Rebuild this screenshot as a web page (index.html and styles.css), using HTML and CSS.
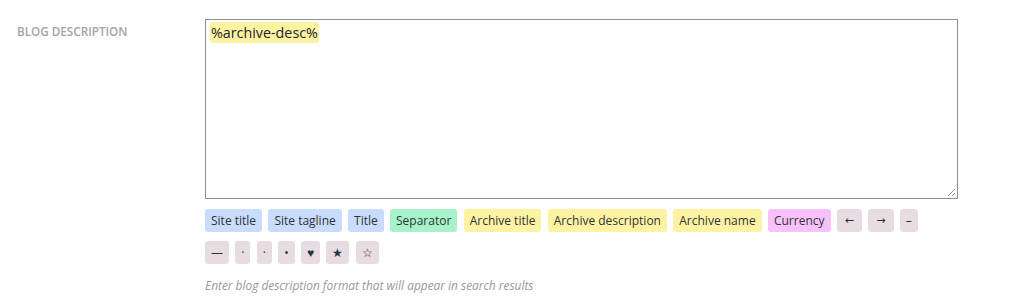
FILE: index.html
```html
<!DOCTYPE html>
<html lang="en">
<head>
    <meta charset="UTF-8">
    <title>Blog description</title>
    <link rel="stylesheet" href="styles.css">
</head>
<body>
    <!-- Settings row -->
    <div class="field-row">
        <label class="field-label">Blog Description</label>

        <div class="field-body">
            <!-- Editor with highlighted variable -->
            <div class="editor">
                <mark class="var">%archive-desc%</mark>
                <svg class="grip" width="10" height="10" viewBox="0 0 10 10">
                    <line x1="9" y1="2" x2="2" y2="9" stroke="#9a9a9a" stroke-width="1"/>
                    <line x1="9" y1="6" x2="6" y2="9" stroke="#9a9a9a" stroke-width="1"/>
                </svg>
            </div>

            <!-- Variable buttons -->
            <div class="tags">
                <span class="tag blue">Site title</span>
                <span class="tag blue">Site tagline</span>
                <span class="tag blue">Title</span>
                <span class="tag green">Separator</span>
                <span class="tag yellow">Archive title</span>
                <span class="tag yellow">Archive description</span>
                <span class="tag yellow">Archive name</span>
                <span class="tag pink">Currency</span>
                <span class="tag grey sym">&larr;</span>
                <span class="tag grey sym">&rarr;</span>
                <span class="tag grey">&ndash;</span>
                <span class="tag grey">&mdash;</span>
                <span class="tag grey">&middot;</span>
                <span class="tag grey">&middot;</span>
                <span class="tag grey">&bull;</span>
                <span class="tag grey">&#9829;</span>
                <span class="tag grey">&#9733;</span>
                <span class="tag grey">&#9734;</span>
            </div>

            <p class="help">Enter blog description format that will appear in search results</p>
        </div>
    </div>
</body>
</html>
```

FILE: styles.css
```css
/* Page basics */
body {
    margin: 0;
    background: #fff;
    font-family: "Open Sans", "Noto Sans", sans-serif;
    color: #333;
}

/* One settings row: label on the left, control on the right */
.field-row {
    display: flex;
    padding: 19px 0 0 17px;
}

.field-label {
    width: 188px;
    flex-shrink: 0;
    padding-top: 4px;
    font-size: 11.7px;
    font-weight: 600;
    text-transform: uppercase;
    color: #a0a5aa;
}

.field-body {
    width: 753px;
}

/* Editor box */
.editor {
    position: relative;
    border: 1px solid #8c8f94;
    padding: 3px 4px;
    box-sizing: border-box;
    height: 180px;
    font-size: 14.3px;
    line-height: 20px;
    color: #2c3338;
}

.var {
    background: #fff3a3;
    border-radius: 3px;
    padding: 1px 1px;
    color: #1d2327;
}

.grip {
    position: absolute;
    right: 1px;
    bottom: 1px;
}

/* Variable buttons */
.tags {
    display: flex;
    flex-wrap: wrap;
    gap: 9px 6.3px;
    margin-top: 10px;
    width: 720px;
}

.tag {
    display: inline-block;
    height: 23px;
    line-height: 23px;
    padding: 0 6px;
    text-align: center;
    border-radius: 3px;
    font-size: 12px;
    color: #2c3338;
}

/* Arrows look too small in Open Sans */
.sym {
    font-family: "DejaVu Sans", sans-serif;
    font-size: 11px;
    padding: 0 8px;
}

.blue { background: #cadcfc; }
.green { background: #a7f3c9; }
.yellow { background: #fff3a3; }
.pink { background: #f8c1fb; }
.grey { background: #e6dce2; }

/* Help text */
.help {
    margin: 13px 0 0;
    font-size: 11.9px;
    font-style: italic;
    color: #999;
}
```
